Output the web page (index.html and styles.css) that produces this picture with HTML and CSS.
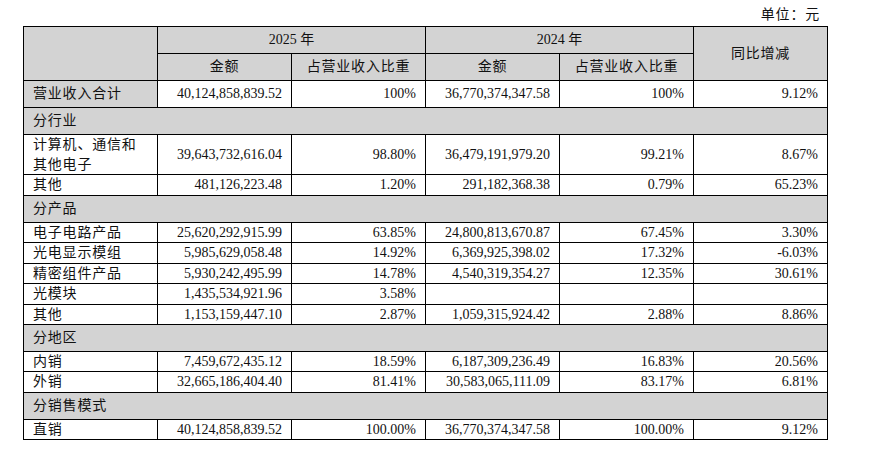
FILE: index.html
```html
<!DOCTYPE html>
<html lang="zh-CN">
<head>
<meta charset="utf-8">
<link rel="stylesheet" href="styles.css">
</head>
<body>
<div class="page">
  <div class="unit cn">单位：元</div>
  <table class="report">
    <colgroup>
      <col class="c"><col class="c"><col class="c"><col class="c"><col class="c"><col class="c">
    </colgroup>
    <thead>
      <tr class="h">
        <th rowspan="2" class="gray"></th>
        <th colspan="2" class="gray">2025 年</th>
        <th colspan="2" class="gray">2024 年</th>
        <th rowspan="2" class="gray cn">同比增减</th>
      </tr>
      <tr class="h">
        <th class="gray cn">金额</th>
        <th class="gray cn">占营业收入比重</th>
        <th class="gray cn">金额</th>
        <th class="gray cn">占营业收入比重</th>
      </tr>
    </thead>
    <tbody>
      <tr class="h">
        <td class="gray cn label">营业收入合计</td>
        <td class="num">40,124,858,839.52</td>
        <td class="num">100%</td>
        <td class="num">36,770,374,347.58</td>
        <td class="num">100%</td>
        <td class="num">9.12%</td>
      </tr>
      <tr class="sec"><td colspan="6" class="gray cn label">分行业</td></tr>
      <tr class="two">
        <td class="cn label">计算机、通信和<br>其他电子</td>
        <td class="num">39,643,732,616.04</td>
        <td class="num">98.80%</td>
        <td class="num">36,479,191,979.20</td>
        <td class="num">99.21%</td>
        <td class="num">8.67%</td>
      </tr>
      <tr class="d t">
        <td class="cn label">其他</td>
        <td class="num">481,126,223.48</td>
        <td class="num">1.20%</td>
        <td class="num">291,182,368.38</td>
        <td class="num">0.79%</td>
        <td class="num">65.23%</td>
      </tr>
      <tr class="sec"><td colspan="6" class="gray cn label">分产品</td></tr>
      <tr class="d">
        <td class="cn label">电子电路产品</td>
        <td class="num">25,620,292,915.99</td>
        <td class="num">63.85%</td>
        <td class="num">24,800,813,670.87</td>
        <td class="num">67.45%</td>
        <td class="num">3.30%</td>
      </tr>
      <tr class="d t">
        <td class="cn label">光电显示模组</td>
        <td class="num">5,985,629,058.48</td>
        <td class="num">14.92%</td>
        <td class="num">6,369,925,398.02</td>
        <td class="num">17.32%</td>
        <td class="num">-6.03%</td>
      </tr>
      <tr class="d">
        <td class="cn label">精密组件产品</td>
        <td class="num">5,930,242,495.99</td>
        <td class="num">14.78%</td>
        <td class="num">4,540,319,354.27</td>
        <td class="num">12.35%</td>
        <td class="num">30.61%</td>
      </tr>
      <tr class="d t">
        <td class="cn label">光模块</td>
        <td class="num">1,435,534,921.96</td>
        <td class="num">3.58%</td>
        <td class="num"></td>
        <td class="num"></td>
        <td class="num"></td>
      </tr>
      <tr class="d">
        <td class="cn label">其他</td>
        <td class="num">1,153,159,447.10</td>
        <td class="num">2.87%</td>
        <td class="num">1,059,315,924.42</td>
        <td class="num">2.88%</td>
        <td class="num">8.86%</td>
      </tr>
      <tr class="sec"><td colspan="6" class="gray cn label">分地区</td></tr>
      <tr class="d">
        <td class="cn label">内销</td>
        <td class="num">7,459,672,435.12</td>
        <td class="num">18.59%</td>
        <td class="num">6,187,309,236.49</td>
        <td class="num">16.83%</td>
        <td class="num">20.56%</td>
      </tr>
      <tr class="d t">
        <td class="cn label">外销</td>
        <td class="num">32,665,186,404.40</td>
        <td class="num">81.41%</td>
        <td class="num">30,583,065,111.09</td>
        <td class="num">83.17%</td>
        <td class="num">6.81%</td>
      </tr>
      <tr class="sec"><td colspan="6" class="gray cn label">分销售模式</td></tr>
      <tr class="d">
        <td class="cn label">直销</td>
        <td class="num">40,124,858,839.52</td>
        <td class="num">100.00%</td>
        <td class="num">36,770,374,347.58</td>
        <td class="num">100.00%</td>
        <td class="num">9.12%</td>
      </tr>
    </tbody>
  </table>
</div>
</body>
</html>
```

FILE: styles.css
```css
html, body {
  margin: 0;
  padding: 0;
  background: #fff;
}
body {
  font-family: "Liberation Serif", "Noto Sans CJK SC", serif;
  font-size: 14px;
  color: #111;
}
.page {
  padding: 5px 0 0 23px;
  width: 804px;
}
.unit {
  text-align: right;
  padding-right: 7px;
  height: 21px;
  line-height: 20px;
}
.cn {
  letter-spacing: 0.8px;
}
.report {
  border-collapse: collapse;
  table-layout: fixed;
  width: 804px;
}
.report .c {
  width: 134px;
}
.report th,
.report td {
  border: 1px solid #000;
  padding: 0 9px;
  line-height: 18px;
  font-weight: normal;
  overflow: hidden;
  white-space: nowrap;
}
.report th {
  text-align: center;
}
.gray {
  background: #d3d3d3;
}
.label {
  text-align: left;
}
.num {
  text-align: right;
}
.h td, .h th {
  height: 26px;
}
.sec td {
  height: 26px;
}
.two td {
  height: 39px;
  line-height: 19.5px;
}
.d td {
  height: 19px;
}
.d.t td {
  height: 20px;
}
```
